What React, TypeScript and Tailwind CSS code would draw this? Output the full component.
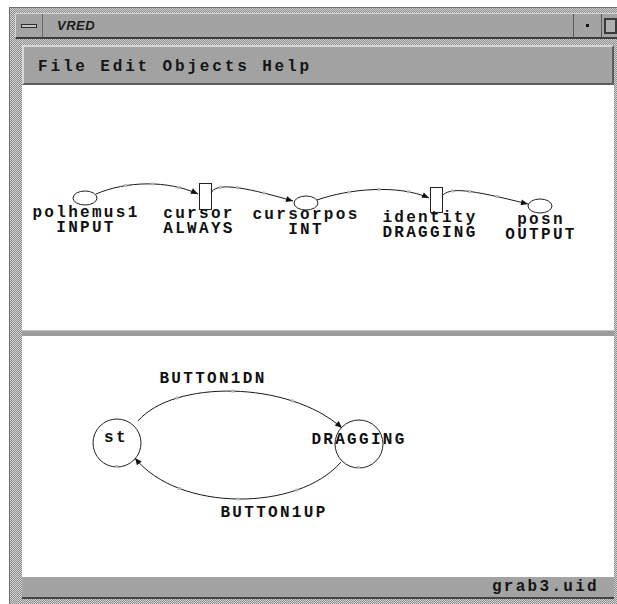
import React from 'react';

type Pt = [number, number];
type Curve = [Pt, Pt, Pt, Pt];

// point on a cubic curve
const bez = (c: Curve, t: number): Pt => {
  const u = 1 - t;
  const a = u * u * u;
  const b = 3 * u * u * t;
  const d = 3 * u * t * t;
  const e = t * t * t;
  return [
    a * c[0][0] + b * c[1][0] + d * c[2][0] + e * c[3][0],
    a * c[0][1] + b * c[1][1] + d * c[2][1] + e * c[3][1],
  ];
};

const pathOf = (c: Curve) =>
  `M${c[0][0]} ${c[0][1]} C${c[1][0]} ${c[1][1]}, ${c[2][0]} ${c[2][1]}, ${c[3][0]} ${c[3][1]}`;

const Arc: React.FC<{ c: Curve; dots?: number[] }> = ({ c, dots = [0.3, 0.55, 0.8] }) => {
  const [x, y] = c[3];
  const dx = x - c[2][0];
  const dy = y - c[2][1];
  const len = Math.hypot(dx, dy) || 1;
  const ux = dx / len;
  const uy = dy / len;
  const bx = x - ux * 7;
  const by = y - uy * 7;
  const head = `${x},${y} ${bx - uy * 3},${by + ux * 3} ${bx + uy * 3},${by - ux * 3}`;
  return (
    <g>
      <path d={pathOf(c)} fill="none" stroke="#1a1a1a" strokeWidth={1} />
      {dots.map((t) => {
        const p = bez(c, t);
        return <rect key={t} x={p[0] - 1.5} y={p[1] - 1.5} width={3} height={3} fill="#b8b8b8" />;
      })}
      <polygon points={head} fill="#111" />
    </g>
  );
};

const Label: React.FC<{ x: number; y: number; children: React.ReactNode }> = ({ x, y, children }) => (
  <text
    x={x}
    y={y}
    textAnchor="middle"
    className="fill-[#111] font-['Liberation_Mono',monospace] font-bold text-[16px] tracking-[2.3px]"
  >
    {children}
  </text>
);

const topArcs: Curve[] = [
  [[98, 194], [128, 181], [170, 180], [200, 194]],
  [[213, 193], [218, 183], [240, 185], [295, 201]],
  [[319, 200], [350, 189], [400, 184], [431, 198]],
  [[444, 196], [452, 187], [470, 189], [530, 204]],
];

const bottomArcs: Curve[] = [
  [[140, 422], [175, 381], [290, 381], [344, 429]],
  [[343, 463], [300, 513], [180, 513], [137, 459]],
];

const NetPanel = () => (
  <svg width={590} height={246} viewBox="24 85 590 246" className="block">
    <ellipse cx={87} cy={198} rx={12} ry={7} fill="white" stroke="#222" />
    <rect x={201.5} y={183.5} width={12} height={26} fill="white" stroke="#222" />
    <ellipse cx={308} cy={203} rx={12} ry={7} fill="white" stroke="#222" />
    <rect x={432.5} y={187.5} width={12} height={25} fill="white" stroke="#222" />
    <ellipse cx={542} cy={206} rx={12} ry={7} fill="white" stroke="#222" />
    {topArcs.map((c, i) => (
      <Arc key={i} c={c} />
    ))}
    <Label x={88} y={217}>polhemus1</Label>
    <Label x={88} y={232}>INPUT</Label>
    <Label x={201} y={218}>cursor</Label>
    <Label x={201} y={233}>ALWAYS</Label>
    <Label x={308} y={219}>cursorpos</Label>
    <Label x={308} y={234}>INT</Label>
    <Label x={432} y={222}>identity</Label>
    <Label x={432} y={237}>DRAGGING</Label>
    <Label x={543} y={224}>posn</Label>
    <Label x={543} y={239}>OUTPUT</Label>
  </svg>
);

const StatePanel = () => (
  <svg width={590} height={241} viewBox="24 337 590 241" className="block">
    <circle cx={119} cy={444} r={24} fill="none" stroke="#222" />
    <circle cx={361} cy={445} r={24} fill="none" stroke="#222" />
    <rect x={117} y={466} width={3} height={3} fill="#b8b8b8" />
    <rect x={359} y={467} width={3} height={3} fill="#b8b8b8" />
    {bottomArcs.map((c, i) => (
      <Arc key={i} c={c} dots={[0.25, 0.5, 0.75]} />
    ))}
    <Label x={118} y={443}>st</Label>
    <Label x={361} y={445}>DRAGGING</Label>
    <Label x={215} y={384}>BUTTON1DN</Label>
    <Label x={276} y={518}>BUTTON1UP</Label>
  </svg>
);

export default function App() {
  return (
    <div className="w-[617px] h-[604px] overflow-hidden bg-white">
      {/* window frame */}
      <div className="ml-[9px] mt-[7px] w-[640px] h-[597px] flex flex-col border-l border-t border-[#707070] bg-[repeating-conic-gradient(#8e8e8e_0_25%,#d2d2d2_0_50%)] bg-[length:2px_2px]">
        {/* title bar */}
        <div className="ml-[5px] mt-[5px] w-[620px] h-[26px] flex items-stretch bg-[#a3a3a3] border-t border-l border-[#d6d6d6] border-b-2 border-b-[#3c3c3c]">
          <div className="w-[27px] flex items-center justify-center border-r border-[#6a6a6a]">
            <div className="w-[16px] h-[4px] bg-[#c4c4c4] border border-[#2e2e2e]" />
          </div>
          <div className="pl-[14px] flex items-center font-['Liberation_Sans',sans-serif] italic font-bold text-[13px] tracking-[0.5px] text-[#1a1a1a]">
            VRED
          </div>
          <div className="flex-1" />
          <div className="w-[28px] flex items-center justify-center border-l border-[#5a5a5a]">
            <div className="w-[3px] h-[3px] bg-[#111]" />
          </div>
          <div className="w-[34px] pl-[2px] flex items-center border-l border-[#5a5a5a]">
            <div className="w-[13px] h-[16px] border-2 border-[#3a3a3a] bg-[#b0b0b0]" />
          </div>
        </div>

        {/* client area */}
        <div className="ml-[12px] mt-[6px] w-[592px] flex flex-col">
          <div className="h-[40px] flex items-center pl-[14px] pt-[3px] bg-[#a2a2a2] border-t-2 border-l-2 border-[#d8d8d8] border-b-2 border-r-2 border-b-[#5e5e5e] border-r-[#5e5e5e]">
            <span className="whitespace-pre font-['Liberation_Mono',monospace] font-bold text-[16px] tracking-[2.85px] text-[#151515]">
              File Edit Objects Help
            </span>
          </div>
          <div className="h-[245px] bg-white">
            <NetPanel />
          </div>
          <div className="h-[6px] bg-[#9b9b9b] border-t border-[#c8c8c8]" />
          <div className="h-[241px] bg-white">
            <StatePanel />
          </div>
          <div className="h-[22px] flex items-center justify-end pr-[15px] bg-[#a3a3a3] border-b-2 border-[#444]">
            <span className="font-['Liberation_Mono',monospace] font-bold text-[16px] tracking-[2.3px] text-[#151515]">
              grab3.uid
            </span>
          </div>
        </div>
      </div>
    </div>
  );
}
